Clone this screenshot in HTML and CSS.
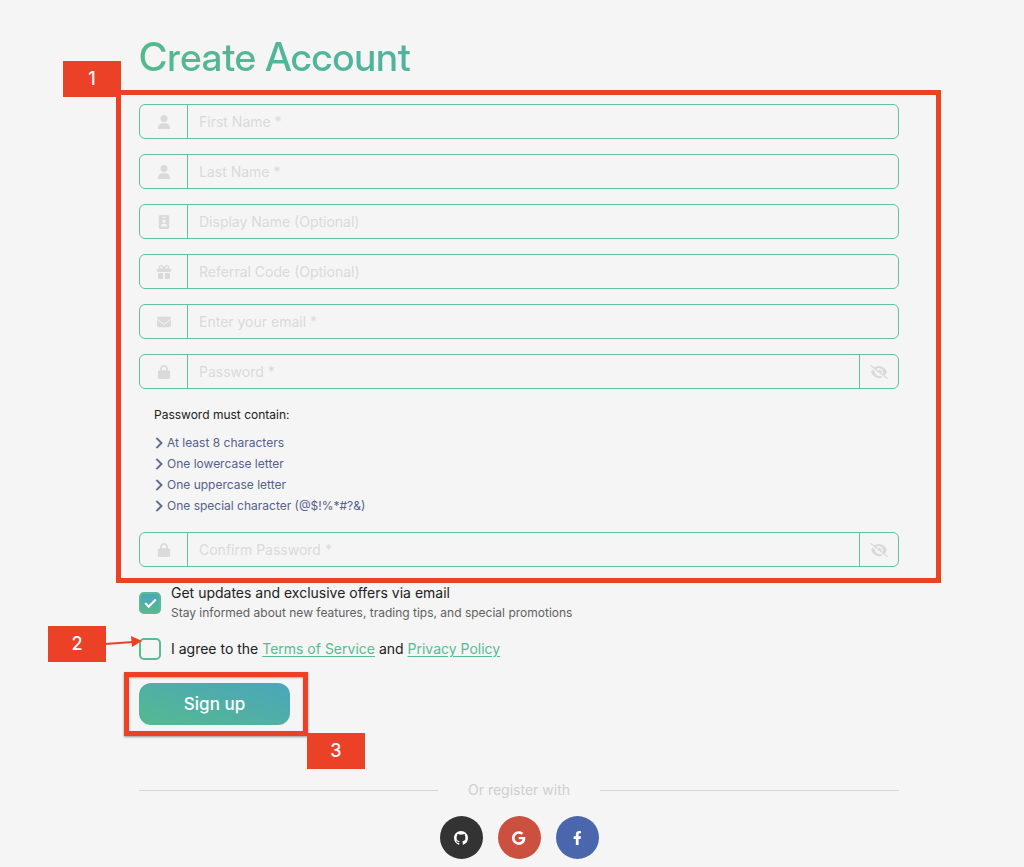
FILE: index.html
```
<!DOCTYPE html>
<html lang="en">
<head>
    <meta charset="UTF-8">
    <meta name="viewport" content="width=device-width, initial-scale=1.0">
    <title>Create Account</title>
    <link rel="stylesheet" href="styles.css">
</head>
<body>
    <svg class="sprite" aria-hidden="true">
        <symbol id="user" viewBox="0 0 448 512"><path d="M224 256A128 128 0 1 0 224 0a128 128 0 1 0 0 256zm-45.7 48C79.8 304 0 383.8 0 482.3C0 498.7 13.3 512 29.7 512H418.3c16.4 0 29.7-13.3 29.7-29.7C448 383.8 368.2 304 269.7 304H178.3z"/></symbol>
        <symbol id="badge" viewBox="0 0 384 512"><path d="M64 0C28.7 0 0 28.7 0 64V448c0 35.3 28.7 64 64 64H320c35.3 0 64-28.7 64-64V64c0-35.3-28.7-64-64-64H64zm96 320h64c44.2 0 80 35.8 80 80c0 8.8-7.2 16-16 16H96c-8.8 0-16-7.2-16-16c0-44.2 35.8-80 80-80zm-32-96a64 64 0 1 1 128 0 64 64 0 1 1 -128 0zM144 64h96c8.8 0 16 7.2 16 16s-7.2 16-16 16H144c-8.8 0-16-7.2-16-16s7.2-16 16-16z"/></symbol>
        <symbol id="gift" viewBox="0 0 512 512"><path d="M190.5 68.8L225.3 128H224 152c-22.1 0-40-17.9-40-40s17.9-40 40-40h2.2c14.9 0 28.8 7.9 36.3 20.8zM64 88c0 14.4 3.5 28 9.6 40H32c-17.7 0-32 14.3-32 32v64c0 17.7 14.3 32 32 32H480c17.7 0 32-14.3 32-32V160c0-17.7-14.3-32-32-32H438.4c6.1-12 9.6-25.6 9.6-40c0-48.6-39.4-88-88-88h-2.2c-31.9 0-61.5 16.9-77.7 44.4L256 85.5l-24.1-41C215.7 16.9 186.1 0 154.2 0H152C103.4 0 64 39.4 64 88zm336 0c0 22.1-17.9 40-40 40H288h-1.3l34.8-59.2C329.1 55.9 342.9 48 357.8 48H360c22.1 0 40 17.9 40 40zM32 288V464c0 26.5 21.5 48 48 48H224V288H32zM288 512H432c26.5 0 48-21.5 48-48V288H288V512z"/></symbol>
        <symbol id="envelope" viewBox="0 0 512 512"><path d="M48 64C21.5 64 0 85.5 0 112c0 15.1 7.1 29.3 19.2 38.4L236.8 313.6c11.4 8.5 27 8.5 38.4 0L492.8 150.4c12.1-9.1 19.2-23.3 19.2-38.4c0-26.5-21.5-48-48-48H48zM0 176V384c0 35.3 28.7 64 64 64H448c35.3 0 64-28.7 64-64V176L294.4 339.2c-22.8 17.1-54 17.1-76.8 0L0 176z"/></symbol>
        <symbol id="lock" viewBox="0 0 448 512"><path d="M144 144v48H304V144c0-44.2-35.8-80-80-80s-80 35.8-80 80zM80 192V144C80 64.5 144.5 0 224 0s144 64.5 144 144v48h16c35.3 0 64 28.7 64 64V448c0 35.3-28.7 64-64 64H64c-35.3 0-64-28.7-64-64V256c0-35.3 28.7-64 64-64H80z"/></symbol>
        <symbol id="eye-slash" viewBox="0 0 640 512"><path d="M38.8 5.1C28.4-3.1 13.3-1.2 5.1 9.2S-1.2 34.7 9.2 42.9l592 464c10.4 8.2 25.5 6.3 33.7-4.1s6.3-25.5-4.1-33.7L525.6 386.7c39.6-40.6 66.4-86.1 79.9-118.4c3.3-7.9 3.3-16.7 0-24.6c-14.9-35.7-46.2-87.7-93-131.1C465.5 68.8 400.8 32 320 32c-68.2 0-125 26.3-169.3 60.8L38.8 5.1zM223.1 149.5C248.6 126.2 282.7 112 320 112c79.5 0 144 64.5 144 144c0 24.9-6.3 48.3-17.4 68.7L408 294.5c8.4-19.3 10.6-41.4 4.8-63.3c-11.1-41.5-47.8-69.4-88.6-71.1c-5.8-.2-9.2 6.1-7.4 11.7c2.1 6.4 3.3 13.2 3.3 20.3c0 10.2-2.4 19.8-6.6 28.3l-90.3-70.8zM373 389.9c-16.4 6.5-34.3 10.1-53 10.1c-79.5 0-144-64.5-144-144c0-6.9 .5-13.6 1.4-20.2L83.1 161.5C60.3 191.2 44 220.8 34.5 243.7c-3.3 7.9-3.3 16.7 0 24.6c14.9 35.7 46.2 87.7 93 131.1C174.5 443.2 239.2 480 320 480c47.8 0 89.9-12.9 126.2-32.5L373 389.9z"/></symbol>
        <symbol id="chevron" viewBox="0 0 320 512"><path stroke-width="20" d="M310.6 233.4c12.5 12.5 12.5 32.8 0 45.3l-192 192c-12.5 12.5-32.8 12.5-45.3 0s-12.5-32.8 0-45.3L242.7 256 73.4 86.6c-12.5-12.5-12.5-32.8 0-45.3s32.8-12.5 45.3 0l192 192z"/></symbol>
    </svg>

    <div class="container">
        <h1>Create Account</h1>

        <form>
            <div class="fields">
                <div class="input-group">
                    <label for="firstName"><svg class="icon"><use href="#user"/></svg></label>
                    <input type="text" id="firstName" placeholder="First Name *" aria-label="First Name">
                </div>
                <div class="input-group">
                    <label for="lastName"><svg class="icon"><use href="#user"/></svg></label>
                    <input type="text" id="lastName" placeholder="Last Name *" aria-label="Last Name">
                </div>
                <div class="input-group">
                    <label for="displayName"><svg class="icon"><use href="#badge"/></svg></label>
                    <input type="text" id="displayName" placeholder="Display Name (Optional)" aria-label="Display Name">
                </div>
                <div class="input-group">
                    <label for="referral"><svg class="icon"><use href="#gift"/></svg></label>
                    <input type="text" id="referral" placeholder="Referral Code (Optional)" aria-label="Referral Code">
                </div>
                <div class="input-group">
                    <label for="email"><svg class="icon"><use href="#envelope"/></svg></label>
                    <input type="email" id="email" placeholder="Enter your email *" aria-label="Email">
                </div>
                <div class="input-group">
                    <label for="password"><svg class="icon"><use href="#lock"/></svg></label>
                    <input type="password" id="password" placeholder="Password *" aria-label="Password">
                    <button type="button" class="toggle" aria-label="Show password"><svg class="icon eye"><use href="#eye-slash"/></svg></button>
                </div>

                <div class="rules">
                    <p>Password must contain:</p>
                    <ul>
                        <li><svg class="chevron"><use href="#chevron"/></svg>At least 8 characters</li>
                        <li><svg class="chevron"><use href="#chevron"/></svg>One lowercase letter</li>
                        <li><svg class="chevron"><use href="#chevron"/></svg>One uppercase letter</li>
                        <li><svg class="chevron"><use href="#chevron"/></svg>One special character (@$!%*#?&amp;)</li>
                    </ul>
                </div>

                <div class="input-group">
                    <label for="confirm"><svg class="icon"><use href="#lock"/></svg></label>
                    <input type="password" id="confirm" placeholder="Confirm Password *" aria-label="Confirm Password">
                    <button type="button" class="toggle" aria-label="Show password"><svg class="icon eye"><use href="#eye-slash"/></svg></button>
                </div>

                <div class="frame frame-fields"></div>
                <span class="step step-1">1</span>
            </div>

            <div class="check-row">
                <input type="checkbox" id="updates" checked>
                <label for="updates">Get updates and exclusive offers via email
                    <small>Stay informed about new features, trading tips, and special promotions</small>
                </label>
            </div>

            <div class="check-row agree">
                <input type="checkbox" id="agree">
                <label for="agree">I agree to the <a href="#">Terms of Service</a> and <a href="#">Privacy Policy</a></label>
                <span class="step step-2">2</span>
                <svg class="arrow" viewBox="0 0 38 12"><path d="M0 6L28 4" fill="none" stroke="#eb4126" stroke-width="2"/><path d="M26 -2L37 3L27 9Z" fill="#eb4126"/></svg>
            </div>

            <div class="submit">
                <button type="submit" class="submit-btn">Sign up</button>
                <div class="frame frame-submit"></div>
                <span class="step step-3">3</span>
            </div>
        </form>

        <div class="divider">Or register with</div>

        <div class="socials">
            <button type="button" class="social github" aria-label="GitHub"><svg viewBox="0 0 16 16"><path d="M8 0C3.58 0 0 3.58 0 8c0 3.54 2.29 6.53 5.47 7.59.4.07.55-.17.55-.38 0-.19-.01-.82-.01-1.49-2.01.37-2.53-.49-2.69-.94-.09-.23-.48-.94-.82-1.13-.28-.15-.68-.52-.01-.53.63-.01 1.08.58 1.23.82.72 1.21 1.87.87 2.33.66.07-.52.28-.87.51-1.07-1.78-.2-3.64-.89-3.64-3.95 0-.87.31-1.59.82-2.15-.08-.2-.36-1.02.08-2.12 0 0 .67-.21 2.2.82.64-.18 1.32-.27 2-.27.68 0 1.36.09 2 .27 1.53-1.04 2.2-.82 2.2-.82.44 1.1.16 1.92.08 2.12.51.56.82 1.27.82 2.15 0 3.07-1.87 3.75-3.65 3.95.29.25.54.73.54 1.48 0 1.07-.01 1.93-.01 2.2 0 .21.15.46.55.38A8.013 8.013 0 0016 8c0-4.42-3.58-8-8-8z"/></svg></button>
            <button type="button" class="social google" aria-label="Google"><svg viewBox="0 0 488 512"><path d="M488 261.8C488 403.3 391.1 504 248 504 110.8 504 0 393.2 0 256S110.8 8 248 8c66.8 0 123 24.5 166.3 64.9l-67.5 64.9C258.5 52.6 94.3 116.6 94.3 256c0 86.5 69.1 156.6 153.7 156.6 98.2 0 135-70.4 140.8-106.9H248v-85.3h236.1c2.3 12.7 3.9 24.9 3.9 41.4z"/></svg></button>
            <button type="button" class="social facebook" aria-label="Facebook"><svg viewBox="0 0 320 512"><path d="M279.14 288l14.22-92.66h-88.91v-60.13c0-25.35 12.42-50.06 52.24-50.06h40.42V6.26S260.43 0 225.36 0c-73.22 0-121.08 44.38-121.08 124.72v70.62H22.89V288h81.39v224h100.17V288z"/></svg></button>
        </div>
    </div>
</body>
</html>
```
FILE: styles.css
```
* {
    margin: 0;
    padding: 0;
    box-sizing: border-box;
}

body {
    background-color: #f5f5f5;
    color: #212121;
    font-family: 'Inter', sans-serif;
    font-size: 14px;
    line-height: 20px;
    padding: 33px 0 8px 14px;
}

button, input {
    font-family: inherit;
}

.sprite {
    position: absolute;
    width: 0;
    height: 0;
}

.container {
    width: 100%;
    max-width: 760px;
    margin: 0 auto;
}

h1 {
    font-family: 'Inter Display', 'Inter', sans-serif;
    font-size: 39px;
    line-height: 48px;
    font-weight: 500;
    margin-bottom: 23px;
    background: linear-gradient(to right, #55b98f, #4aa6bc);
    -webkit-background-clip: text;
    background-clip: text;
    color: transparent;
}

.fields {
    position: relative;
    display: flex;
    flex-direction: column;
    gap: 15px;
}

.input-group {
    display: flex;
    height: 35px;
    border: 1px solid #62c19e;
    border-radius: 6px;
}

.input-group label {
    display: flex;
    align-items: center;
    justify-content: center;
    width: 48px;
    border-right: 1px solid #62c19e;
}

.input-group input {
    flex: 1;
    min-width: 0;
    padding: 0 11px;
    border: none;
    outline: none;
    background: transparent;
    font-size: 14px;
}

.input-group input::placeholder {
    color: #dadada;
}

.icon {
    width: 14px;
    height: 14px;
    fill: #dadada;
}

.eye {
    width: 18px;
}

.toggle {
    display: flex;
    align-items: center;
    justify-content: center;
    width: 39px;
    border: none;
    border-left: 1px solid #62c19e;
    background: transparent;
    cursor: pointer;
}

.rules {
    padding: 0 15px 1px;
    font-size: 12px;
    line-height: 21px;
}

.rules p {
    margin-bottom: 7px;
}

.rules ul {
    list-style: none;
    color: #56618a;
}

.rules li {
    display: flex;
    align-items: center;
    gap: 4px;
}

.chevron {
    width: 9px;
    height: 12px;
    fill: #56618a;
    stroke: #56618a;
}

.check-row {
    position: relative;
    display: flex;
    align-items: center;
    gap: 10px;
    margin-top: 16px;
}

.agree {
    margin-top: 15px;
}

.check-row input {
    appearance: none;
    flex-shrink: 0;
    display: flex;
    align-items: center;
    justify-content: center;
    width: 22px;
    height: 22px;
    border: 2px solid #5abb93;
    border-radius: 5px;
}

.check-row input:checked {
    background: linear-gradient(to top, #55b98f, #4aa6bc);
}

.check-row input:checked::after {
    content: '';
    width: 9px;
    height: 4px;
    margin-bottom: 3px;
    border-left: 2px solid #fff;
    border-bottom: 2px solid #fff;
    transform: rotate(-45deg);
}

.check-row small {
    display: block;
    font-size: 12px;
    color: #616161;
}

.check-row a {
    color: #5abb93;
    text-underline-offset: 2px;
}

.submit {
    position: relative;
    width: 151px;
    margin-top: 23px;
}

.submit-btn {
    display: block;
    width: 100%;
    height: 42px;
    border: none;
    border-radius: 12px;
    background: linear-gradient(to top right, #55b98f, #4aa6bc);
    color: #fff;
    font-size: 17px;
    font-weight: 500;
    cursor: pointer;
}

.divider {
    display: flex;
    align-items: center;
    gap: 30px;
    margin-top: 55px;
    color: #cfcfcf;
}

.divider::before,
.divider::after {
    content: '';
    flex: 1;
    height: 1px;
    background-color: #d6d6d6;
}

.socials {
    display: flex;
    justify-content: center;
    gap: 15px;
    margin-top: 16px;
}

.social {
    display: flex;
    align-items: center;
    justify-content: center;
    width: 43px;
    height: 43px;
    border: none;
    border-radius: 50%;
    cursor: pointer;
}

.social svg {
    height: 14px;
    fill: #fff;
}

.github {
    background-color: #333;
}

.google {
    background-color: #cc5040;
}

.facebook {
    background-color: #4a66ad;
}

/* Numbered walkthrough markers, drawn over the form */
.frame {
    position: absolute;
    border: 5px solid #eb4126;
    pointer-events: none;
}

.frame-fields {
    inset: -14px -42px -16px -23px;
}

.frame-submit {
    inset: -11px -18px -11px -15px;
    box-shadow: 0 1px 2px rgba(0, 0, 0, 0.4), inset 0 1px 2px rgba(0, 0, 0, 0.3);
}

.step {
    position: absolute;
    width: 58px;
    height: 36px;
    background-color: #eb4126;
    color: #fff;
    font-size: 18px;
    font-weight: 500;
    line-height: 36px;
    text-align: center;
}

.step-1 {
    top: -43px;
    left: -76px;
}

.step-2 {
    top: -12px;
    left: -91px;
}

.step-3 {
    top: 50px;
    left: 168px;
}

.arrow {
    position: absolute;
    top: 0;
    left: -34px;
    width: 38px;
    height: 12px;
    overflow: visible;
}
```
